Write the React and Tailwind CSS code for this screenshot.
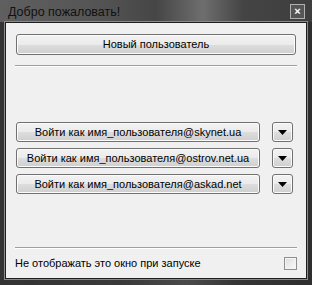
import React from "react";

const btn =
  "flex items-center justify-center rounded-[3px] border border-[#707070] bg-[linear-gradient(#f2f2f2_0%,#ebebeb_50%,#dddddd_51%,#cfcfcf_100%)] text-[11px] text-black shadow-[inset_0_0_0_1px_#fcfcfc] whitespace-nowrap";

const Arrow = () => (
  <svg width="9" height="5" viewBox="0 0 9 5">
    <path d="M0 0 H9 L4.5 5 Z" fill="#000" />
  </svg>
);

const logins = [
  "Войти как имя_пользователя@skynet.ua",
  "Войти как имя_пользователя@ostrov.net.ua",
  "Войти как имя_пользователя@askad.net",
];

export default function App() {
  return (
    <div
      className="w-[312px] h-[285px] flex flex-col bg-[linear-gradient(90deg,#333_0%,#3a3a3a_40%,#4a4a4a_60%,#363636_75%,#2e2e2e_100%)]"
      style={{ fontFamily: '"Liberation Sans", Arial, sans-serif' }}
    >
      {/* title bar */}
      <div className="h-[22px] flex items-center justify-between pl-[8px] pr-[7px] bg-[linear-gradient(90deg,#5f5f5f_0%,#555_30%,#464646_50%,#6e6e6e_65%,#444_78%,#3e3e3e_100%)]">
        <span className="text-[12.5px] text-[#111] leading-none mt-[2px]">Добро пожаловать!</span>
        <div className="w-[15px] h-[15px] border border-[#b0b0b0] bg-[#555] flex items-center justify-center text-white text-[11px] font-bold leading-none">
          ×
        </div>
      </div>
      {/* client */}
      <div className="flex-1 mx-[5px] mb-[6px] border border-[#1e1e1e] shadow-[0_0_0_1px_#8a8a8a] bg-[#f0f0f0] flex flex-col px-[10px]">
        <div className={`${btn} h-[21px] mt-[11px]`}>Новый пользователь</div>
        <div className="mt-[10px] border-t border-[#a0a0a0] border-b-white border-b -mx-[1px]" />
        <div className="flex flex-col gap-[6px] mt-[55px]">
          {logins.map((l) => (
            <div key={l} className="flex items-center gap-[12px]">
              <div className={`${btn} w-[244px] h-[20px]`}>{l}</div>
              <div className={`${btn} w-[21px] h-[20px]`}>
                <Arrow />
              </div>
            </div>
          ))}
        </div>
        <div className="mt-auto border-t border-[#a0a0a0] border-b-white border-b -mx-[1px]" />
        <div className="h-[29px] flex items-center justify-between -ml-[1px]">
          <span className="text-[11px] text-black">Не отображать это окно при запуске</span>
          <div className="w-[13px] h-[13px] border border-[#8e8f8f] bg-[linear-gradient(135deg,#dcdcdc,#fbfbfb)] shadow-[inset_0_0_0_1px_#f4f4f4] mr-[-1px]" />
        </div>
      </div>
    </div>
  );
}
